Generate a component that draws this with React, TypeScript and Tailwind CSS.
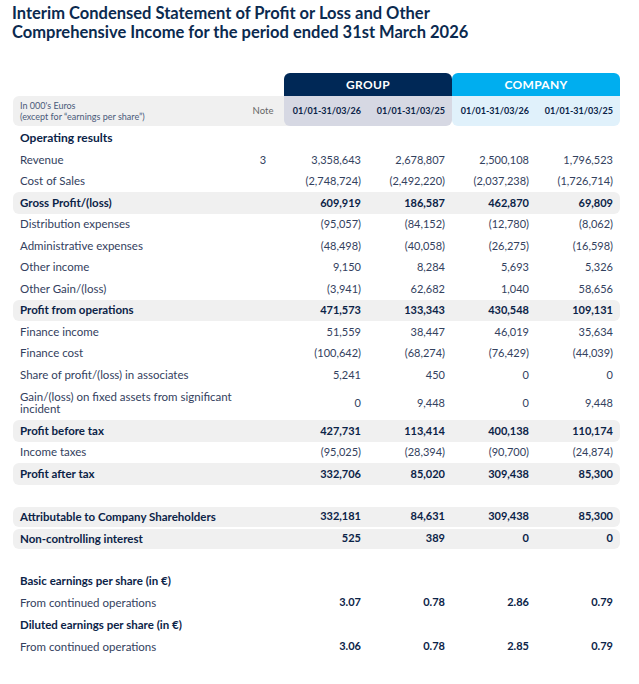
import React from "react";

type Row = {
  label: string;
  note?: string;
  v: string[];
  bold?: boolean;
  tall?: boolean;
  h?: string;
};

const rows: Row[] = [
  { label: "Revenue", note: "3", v: ["3,358,643", "2,678,807", "2,500,108", "1,796,523"] },
  { label: "Cost of Sales", v: ["(2,748,724)", "(2,492,220)", "(2,037,238)", "(1,726,714)"] },
  { label: "Gross Profit/(loss)", bold: true, v: ["609,919", "186,587", "462,870", "69,809"] },
  { label: "Distribution expenses", v: ["(95,057)", "(84,152)", "(12,780)", "(8,062)"] },
  { label: "Administrative expenses", v: ["(48,498)", "(40,058)", "(26,275)", "(16,598)"] },
  { label: "Other income", v: ["9,150", "8,284", "5,693", "5,326"] },
  { label: "Other Gain/(loss)", v: ["(3,941)", "62,682", "1,040", "58,656"] },
  { label: "Profit from operations", bold: true, v: ["471,573", "133,343", "430,548", "109,131"] },
  { label: "Finance income", v: ["51,559", "38,447", "46,019", "35,634"] },
  { label: "Finance cost", v: ["(100,642)", "(68,274)", "(76,429)", "(44,039)"] },
  { label: "Share of profit/(loss) in associates", v: ["5,241", "450", "0", "0"] },
  { label: "Gain/(loss) on fixed assets from significant incident", tall: true, v: ["0", "9,448", "0", "9,448"] },
  { label: "Profit before tax", bold: true, v: ["427,731", "113,414", "400,138", "110,174"] },
  { label: "Income taxes", v: ["(95,025)", "(28,394)", "(90,700)", "(24,874)"] },
  { label: "Profit after tax", bold: true, v: ["332,706", "85,020", "309,438", "85,300"] },
];

const grid = "grid grid-cols-[229px_42px_84px_84px_84px_84px] items-center";

const TableRow = ({ r }: { r: Row }) => (
  <div
    className={`${grid} ${r.h ?? (r.tall ? "h-[34.5px]" : "h-[21.5px]")} ${
      r.bold ? "bg-[#f0f0f0] rounded-md font-bold text-[#0b2347]" : "text-[#33415e]"
    }`}
  >
    <div className="pl-[7px] text-[11.5px] leading-[12px]">
      {r.tall ? (
        <>
          Gain/(loss) on fixed assets from significant
          <br />
          incident
        </>
      ) : (
        r.label
      )}
    </div>
    <div className="text-center text-[11px]">{r.note}</div>
    {r.v.map((x, i) => (
      <div key={i} className="text-right pr-[7px] text-[11px]">
        {x}
      </div>
    ))}
  </div>
);

const Eps = ({ values }: { values: string[] }) => (
  <div className={`${grid} h-[22px] text-[#33415e]`}>
    <div className="pl-[7px] text-[11.5px]">From continued operations</div>
    <div />
    {values.map((x, i) => (
      <div key={i} className="text-right pr-[7px] text-[11px] font-bold text-[#0b2347]">
        {x}
      </div>
    ))}
  </div>
);

const App = () => {
  return (
    <div className="w-[639px] h-[684px] bg-white font-['Lato',sans-serif] overflow-hidden">
      <h1 className="pl-3 pt-[4px] text-[16.5px] leading-[19px] font-bold text-[#0b2a4f]">
        Interim Condensed Statement of Profit or Loss and Other
        <br />
        Comprehensive Income for the period ended 31st March 2026
      </h1>

      <div className="ml-[13px] w-[607px] mt-[31px]">
        {/* header */}
        <div className="flex">
          <div className="w-[279px] -mr-2 flex flex-col">
            <div className="h-[23px]" />
            <div className="h-[30px] bg-[#f0f0f0] rounded-l-md flex items-center pr-2">
              <div className="w-[229px] pl-[7px] text-[9px] leading-[11px] text-[#4a5a7a]">
                In 000's Euros
                <br />
                (except for “earnings per share”)
              </div>
              <div className="w-[42px] text-center text-[9.5px] text-[#666]">Note</div>
            </div>
          </div>
          <div className="relative w-[168px] rounded-md overflow-hidden flex flex-col">
            <div className="h-[23px] bg-[#002856] text-white font-bold text-[12px] flex items-center justify-center tracking-wide">
              GROUP
            </div>
            <div className="h-[30px] bg-[#d6d8e3] flex items-center text-[9px] font-bold text-[#0b2347]">
              <div className="w-[84px] text-right pr-[7px]">01/01-31/03/26</div>
              <div className="w-[84px] text-right pr-[7px]">01/01-31/03/25</div>
            </div>
          </div>
          <div className="w-[168px] rounded-md overflow-hidden flex flex-col">
            <div className="h-[23px] bg-[#00aeef] text-white font-bold text-[12px] flex items-center justify-center tracking-wide">
              COMPANY
            </div>
            <div className="h-[30px] bg-[#e0f1fb] flex items-center text-[9px] font-bold text-[#0b2347]">
              <div className="w-[84px] text-right pr-[7px]">01/01-31/03/26</div>
              <div className="w-[84px] text-right pr-[7px]">01/01-31/03/25</div>
            </div>
          </div>
        </div>

        <div className="mt-px h-[22px] flex items-center pl-[7px] text-[12px] font-bold text-[#0b2347]">
          Operating results
        </div>

        {rows.map((r, i) => (
          <TableRow key={i} r={r} />
        ))}

        <div className="h-[22px]" />

        <div className="flex flex-col gap-[2px]">
          <TableRow
            r={{ label: "Attributable to Company Shareholders", bold: true, h: "h-[20px]", v: ["332,181", "84,631", "309,438", "85,300"] }}
          />
          <TableRow r={{ label: "Non-controlling interest", bold: true, h: "h-[20px]", v: ["525", "389", "0", "0"] }} />
        </div>

        <div className="h-[21px]" />

        <div className={`${grid} h-[22px] font-bold text-[#0b2347] text-[11.5px]`}>
          <div className="pl-[7px]">Basic earnings per share (in €)</div>
        </div>
        <Eps values={["3.07", "0.78", "2.86", "0.79"]} />
        <div className={`${grid} h-[22px] font-bold text-[#0b2347] text-[11.5px]`}>
          <div className="pl-[7px]">Diluted earnings per share (in €)</div>
        </div>
        <Eps values={["3.06", "0.78", "2.85", "0.79"]} />
      </div>
    </div>
  );
};

export default App;
